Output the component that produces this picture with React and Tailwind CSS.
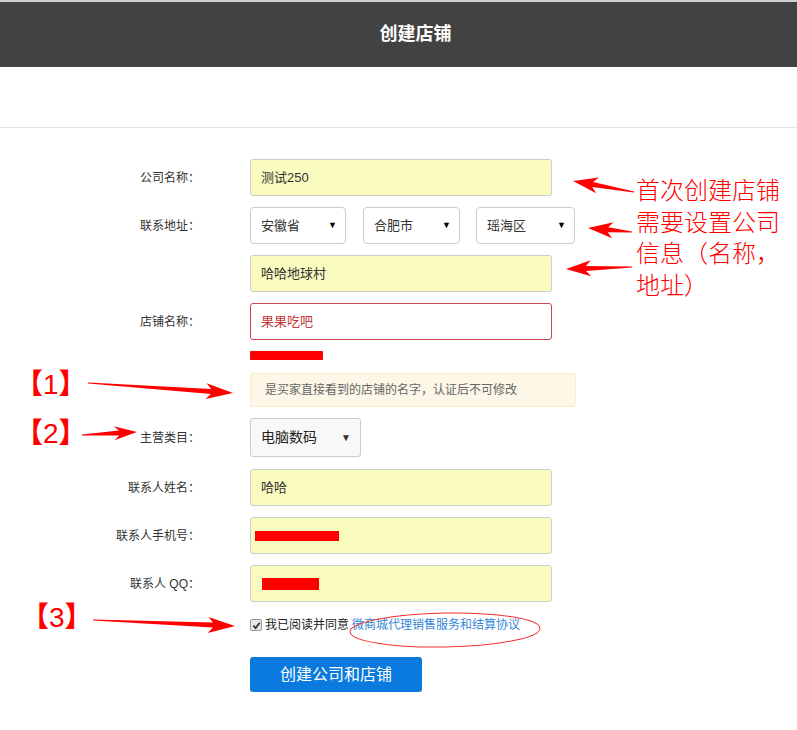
import React from "react"

// arrow shape: thin tail widening toward a barbed head
const arrowPoints = (x1, y1, x2, y2, head = 24, hw = 8, sw = 2.5) => {
  const dx = x2 - x1
  const dy = y2 - y1
  const len = Math.hypot(dx, dy)
  const ux = dx / len
  const uy = dy / len
  const nx = -uy
  const ny = ux
  const bx = x2 - ux * head
  const by = y2 - uy * head
  const rx = x2 - ux * (head + 5)
  const ry = y2 - uy * (head + 5)
  const pts = [
    [x1 + nx * 0.6, y1 + ny * 0.6],
    [bx + nx * sw, by + ny * sw],
    [rx + nx * hw, ry + ny * hw],
    [x2, y2],
    [rx - nx * hw, ry - ny * hw],
    [bx - nx * sw, by - ny * sw],
    [x1 - nx * 0.6, y1 - ny * 0.6],
  ]
  return pts.map((p) => p[0].toFixed(1) + "," + p[1].toFixed(1)).join(" ")
}

const arrows = [
  [634, 192, 573, 181, 20, 8, 2.5],
  [632, 232, 588, 228, 20, 8, 2.5],
  [632, 267, 566, 269, 20, 8, 2.5],
  [88, 383, 233, 393, 22, 8, 2.5],
  [82, 435, 137, 432, 18, 7, 2.5],
  [93, 620, 235, 626, 22, 8, 2.5],
]

const Label = ({ children }) => (
  <div className="w-[200px] shrink-0 text-right text-[12px] text-[#333]">{children}</div>
)

const Select = ({ value, w }) => (
  <div className={`${w} h-[37px] rounded-[4px] border border-[#ccc] bg-white flex items-center justify-between pl-[10px] pr-[8px] text-[13px] text-[#333]`}>
    <span>{value}</span>
    <span className="text-[9px] text-black">▼</span>
  </div>
)

const Mark = ({ n, className }) => (
  <div className={`absolute text-[28px] text-[#ff0000] leading-none ${className}`}>
    <span className="font-black">【</span>
    <span>{n}</span>
    <span className="font-black">】</span>
  </div>
)

export default function App() {
  return (
    <div className="relative w-full min-h-[730px] bg-white font-['Liberation_Sans','Noto_Sans_CJK_SC',sans-serif] overflow-hidden">
      <div className="h-[2px] bg-[#cfcfcf]" />
      <header className="h-[65px] bg-[#424242] flex items-center justify-center pl-[34px]">
        <h1 className="text-[18px] font-bold text-white">创建店铺</h1>
      </header>
      <div className="h-[61px] border-b border-[#e5e5e5]" />

      <form className="pt-[31px]">
        <div className="flex items-center">
          <Label>公司名称：</Label>
          <div className="ml-[50px] w-[302px] h-[37px] rounded-[3px] border border-[#ccc] bg-[#fafcbf] flex items-center px-[10px] text-[13px] text-[#333]">测试250</div>
        </div>

        <div className="flex items-center mt-[11px]">
          <Label>联系地址：</Label>
          <div className="ml-[50px] flex">
            <Select value="安徽省" w="w-[96px]" />
            <div className="ml-[17px]"><Select value="合肥市" w="w-[97px]" /></div>
            <div className="ml-[16px]"><Select value="瑶海区" w="w-[99px]" /></div>
          </div>
        </div>

        <div className="flex items-center mt-[11px]">
          <Label />
          <div className="ml-[50px] w-[302px] h-[37px] rounded-[3px] border border-[#ccc] bg-[#fafcbf] flex items-center px-[10px] text-[13px] text-[#333]">哈哈地球村</div>
        </div>

        <div className="flex items-center mt-[11px]">
          <Label>店铺名称：</Label>
          <div className="ml-[50px] w-[302px] h-[37px] rounded-[3px] border border-[#c9474a] bg-white flex items-center px-[10px] text-[13px] text-[#c23b3b]">果果吃吧</div>
        </div>

        <div className="ml-[250px] mt-[11px] w-[73px] h-[9px] bg-[#ff0000] rounded-[1px]" />

        <div className="ml-[250px] mt-[13px] w-[326px] h-[34px] rounded-[3px] border border-[#f7eccb] bg-[#fcf7e6] flex items-center px-[14px] text-[12px] text-[#666]">
          是买家直接看到的店铺的名字，认证后不可修改
        </div>

        <div className="flex items-center mt-[11px]">
          <Label>主营类目：</Label>
          <div className="ml-[50px] w-[111px] h-[39px] rounded-[3px] border border-[#ccc] bg-[#f8f8f8] flex items-center justify-between pl-[10px] pr-[9px] text-[14px] text-[#222]">
            <span>电脑数码</span>
            <span className="text-[10px] text-[#333]">▼</span>
          </div>
        </div>

        <div className="flex items-center mt-[12px]">
          <Label>联系人姓名：</Label>
          <div className="ml-[50px] w-[302px] h-[37px] rounded-[3px] border border-[#ccc] bg-[#fafcbf] flex items-center px-[10px] text-[13px] text-[#333]">哈哈</div>
        </div>

        <div className="flex items-center mt-[11px]">
          <Label>联系人手机号：</Label>
          <div className="ml-[50px] w-[302px] h-[37px] rounded-[3px] border border-[#ccc] bg-[#fafcbf] flex items-center px-[4px]">
            <div className="w-[84px] h-[10px] bg-[#ff0000]" />
          </div>
        </div>

        <div className="flex items-center mt-[11px]">
          <Label>联系人 QQ：</Label>
          <div className="ml-[50px] w-[302px] h-[37px] rounded-[3px] border border-[#ccc] bg-[#fafcbf] flex items-center px-[11px]">
            <div className="w-[57px] h-[12px] bg-[#ff0000]" />
          </div>
        </div>

        <div className="ml-[250px] mt-[14px] h-[18px] flex items-center text-[12px]">
          <span className="w-[12px] h-[12px] rounded-[2px] border border-[#999] bg-[#e6e6e6] flex items-center justify-center">
            <svg width="9" height="9" viewBox="0 0 10 10">
              <path d="M1.5 5.2 L4 7.8 L8.6 2" fill="none" stroke="#333" strokeWidth="2" />
            </svg>
          </span>
          <span className="ml-[3px] text-[#222]">我已阅读并同意</span>
          <a className="ml-[3px] text-[#3585d6]">微商城代理销售服务和结算协议</a>
        </div>

        <button type="button" className="ml-[250px] mt-[23px] w-[172px] h-[35px] rounded-[3px] bg-[#0a7ade] text-white text-[16px] flex items-center justify-center">
          创建公司和店铺
        </button>
      </form>

      {/* annotations over the screenshot */}
      <div className="absolute left-[636px] top-[175px] text-[24px] font-light leading-[31.5px] text-[#ff0000]">
        <div>首次创建店铺</div>
        <div>需要设置公司</div>
        <div>信息（名称，</div>
        <div>地址）</div>
      </div>
      <Mark n="1" className="left-[15px] top-[371px]" />
      <Mark n="2" className="left-[15px] top-[420px]" />
      <Mark n="3" className="left-[21px] top-[604px]" />

      <svg className="absolute inset-0 pointer-events-none" width="797" height="730">
        {arrows.map((a, i) => (
          <polygon key={i} points={arrowPoints(...a)} fill="#ff0000" />
        ))}
        <ellipse cx="445" cy="630" rx="95" ry="17" fill="none" stroke="#f03030" strokeWidth="1" transform="rotate(-1 445 630)" />
      </svg>
    </div>
  )
}
